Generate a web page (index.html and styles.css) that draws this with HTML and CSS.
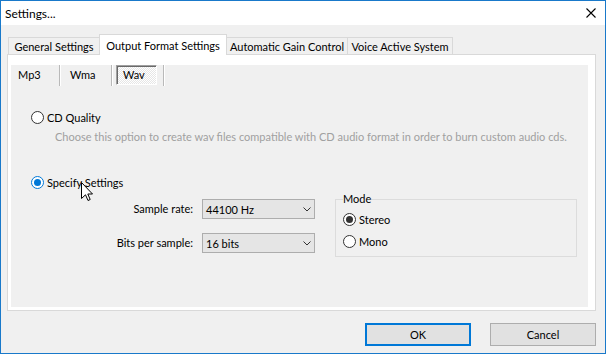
FILE: index.html
```html
<!DOCTYPE html>
<html lang="en">
<head>
  <meta charset="UTF-8">
  <title>Settings...</title>
  <link rel="stylesheet" href="styles.css">
</head>
<body>
  <div class="janela">
    <div class="barra-titulo">
      <span>Settings...</span>
      <svg class="fechar" width="10" height="10" viewBox="0 0 10 10">
        <path d="M0.5 0.5 L9.5 9.5 M9.5 0.5 L0.5 9.5" stroke="#000" stroke-width="1.1" fill="none"/>
      </svg>
    </div>

    <div class="conteudo">
      <div class="abas">
        <div class="aba aba-geral">General Settings</div>
        <div class="aba aba-saida ativa">Output Format Settings</div>
        <div class="aba aba-ganho">Automatic Gain Control</div>
        <div class="aba aba-voz">Voice Active System</div>
      </div>

      <div class="painel">
        <div class="pagina">
          <div class="subabas">
            <div class="subaba primeira">Mp3</div>
            <div class="separador"></div>
            <div class="subaba">Wma</div>
            <div class="separador"></div>
            <div class="subaba pressionada">Wav</div>
            <div class="separador"></div>
          </div>

          <div class="opcao opcao-cd">
            <span class="radio"></span>
            <span class="rotulo">CD Quality</span>
          </div>
          <div class="descricao">Choose this option to create wav files compatible with CD audio format in order to burn custom audio cds.</div>

          <div class="opcao opcao-spec">
            <span class="radio marcado foco"></span>
            <span class="rotulo">Specify Settings</span>
          </div>

          <div class="ajustes">
            <div class="campos">
              <label>Sample rate:</label>
              <div class="combo">
                <span>44100 Hz</span>
                <svg width="8" height="5" viewBox="0 0 8 5"><path d="M0.5 0.5 L4 4 L7.5 0.5" stroke="#333" fill="none"/></svg>
              </div>
              <label>Bits per sample:</label>
              <div class="combo">
                <span>16 bits</span>
                <svg width="8" height="5" viewBox="0 0 8 5"><path d="M0.5 0.5 L4 4 L7.5 0.5" stroke="#333" fill="none"/></svg>
              </div>
            </div>

            <fieldset class="modo">
              <legend>Mode</legend>
              <div class="opcao-modo">
                <span class="radio marcado"></span>
                <span class="rotulo">Stereo</span>
              </div>
              <div class="opcao-modo">
                <span class="radio"></span>
                <span class="rotulo">Mono</span>
              </div>
            </fieldset>
          </div>

          <svg class="cursor" width="13" height="20" viewBox="0 0 13 20">
            <path d="M0.5 0.5 L0.5 16.5 L4.5 12.8 L7 18.5 L9.2 17.5 L6.8 12 L11.5 12 Z" fill="#fff" stroke="#000" stroke-width="1" stroke-linejoin="miter"/>
          </svg>
        </div>
      </div>

      <div class="botoes">
        <button class="botao padrao">OK</button>
        <button class="botao">Cancel</button>
      </div>
    </div>
  </div>
</body>
</html>
```

FILE: styles.css
```css
* {
  box-sizing: border-box;
}

body {
  margin: 0;
  background-color: #f0f0f0;
  color: #000;
  font-family: Lato, "Noto Sans", sans-serif;
  font-size: 11px;
}

.janela {
  width: 606px;
  height: 354px;
  border: 1px solid #1979ca;
  background-color: #f0f0f0;
  display: flex;
  flex-direction: column;
}

.barra-titulo {
  height: 24px;
  flex-shrink: 0;
  background-color: #fff;
  display: flex;
  align-items: center;
  justify-content: space-between;
  padding: 0 9px 0 4px;
  font-size: 12px;
}

.conteudo {
  padding: 9px 9px 0 6px;
}

/* abas de cima */
.abas {
  display: flex;
  align-items: flex-end;
  height: 20px;
}

.aba {
  height: 17px;
  margin-left: -1px;
  border: 1px solid #d9d9d9;
  border-bottom: none;
  background-color: #f0f0f0;
  display: flex;
  align-items: center;
  justify-content: center;
  white-space: nowrap;
}

.aba-geral { width: 92px; margin-left: 1px; }
.aba-saida { width: 128px; }
.aba-ganho { width: 122px; }
.aba-voz { width: 106px; }

.aba.ativa {
  height: 21px;
  margin-bottom: -1px;
  background-color: #fff;
  position: relative;
  z-index: 1;
}

.painel {
  width: 589px;
  height: 257px;
  border: 1px solid #d9d9d9;
  background-color: #fff;
  padding: 10px 7px 3px 3px;
}

.pagina {
  height: 100%;
  background-color: #f0f0f0;
  position: relative;
  overflow: hidden;
}

/* sub abas Mp3 / Wma / Wav */
.subabas {
  display: flex;
  height: 21px;
}

.subaba {
  width: 41px;
  padding-left: 6px;
  line-height: 20px;
}

.subaba.primeira {
  margin-left: 1px;
}

.subaba.pressionada {
  height: 20px;
  border: 1px solid;
  border-color: #a0a0a0 #fff #fff #a0a0a0;
  box-shadow: inset 1px 1px 0 #696969;
  background: repeating-conic-gradient(#fff 0 25%, #e6e6e6 0 50%) 0 0 / 2px 2px;
  padding-left: 6px;
  line-height: 18px;
}

.separador {
  width: 2px;
  border-left: 1px solid #b9b9b9;
  border-right: 1px solid #fff;
  margin: 0 3px 0 6px;
}

/* radios */
.opcao {
  display: flex;
  align-items: center;
  height: 20px;
  margin-left: 20px;
}

.opcao-cd { margin-top: 21px; }
.opcao-spec { margin-top: 27px; }

.radio {
  width: 13px;
  height: 13px;
  border: 1px solid #333;
  border-radius: 50%;
  background-color: #fff;
  display: flex;
  align-items: center;
  justify-content: center;
  flex-shrink: 0;
}

.radio.marcado::after {
  content: "";
  width: 7px;
  height: 7px;
  border-radius: 50%;
  background-color: #333;
}

.radio.foco {
  border-color: #0078d7;
}

.radio.foco::after {
  background-color: #0078d7;
}

.rotulo {
  margin-left: 3px;
  white-space: nowrap;
}

.descricao {
  margin: 2px 0 0 44px;
  line-height: 16px;
  color: #a0a0a0;
  white-space: nowrap;
}

/* sample rate / bits / mode */
.ajustes {
  display: flex;
  align-items: flex-start;
  margin-top: 7px;
}

.campos {
  display: grid;
  grid-template-columns: 182px 113px;
  grid-auto-rows: 20px;
  column-gap: 9px;
  row-gap: 14px;
}

.campos label {
  text-align: right;
  line-height: 20px;
  white-space: nowrap;
}

.combo {
  border: 1px solid #adadad;
  background-color: #e5e5e5;
  display: flex;
  align-items: center;
  justify-content: space-between;
  padding: 0 3px 0 3px;
}

.modo {
  width: 242px;
  margin: -8px 0 0 20px;
  border: 1px solid #dcdcdc;
  padding: 1px 0 4px 7px;
}

.modo legend {
  padding: 0;
  line-height: 16px;
}

.opcao-modo {
  display: flex;
  align-items: center;
  height: 22px;
}

.cursor {
  position: absolute;
  left: 70px;
  top: 117px;
}

/* botoes de baixo */
.botoes {
  display: flex;
  justify-content: flex-end;
  gap: 19px;
  margin-top: 12px;
}

.botao {
  width: 106px;
  height: 23px;
  border: 1px solid #adadad;
  background-color: #e1e1e1;
  font-family: inherit;
  font-size: 11px;
  color: #000;
  padding: 0;
}

.botao.padrao {
  border: 2px solid #0078d7;
}
```
